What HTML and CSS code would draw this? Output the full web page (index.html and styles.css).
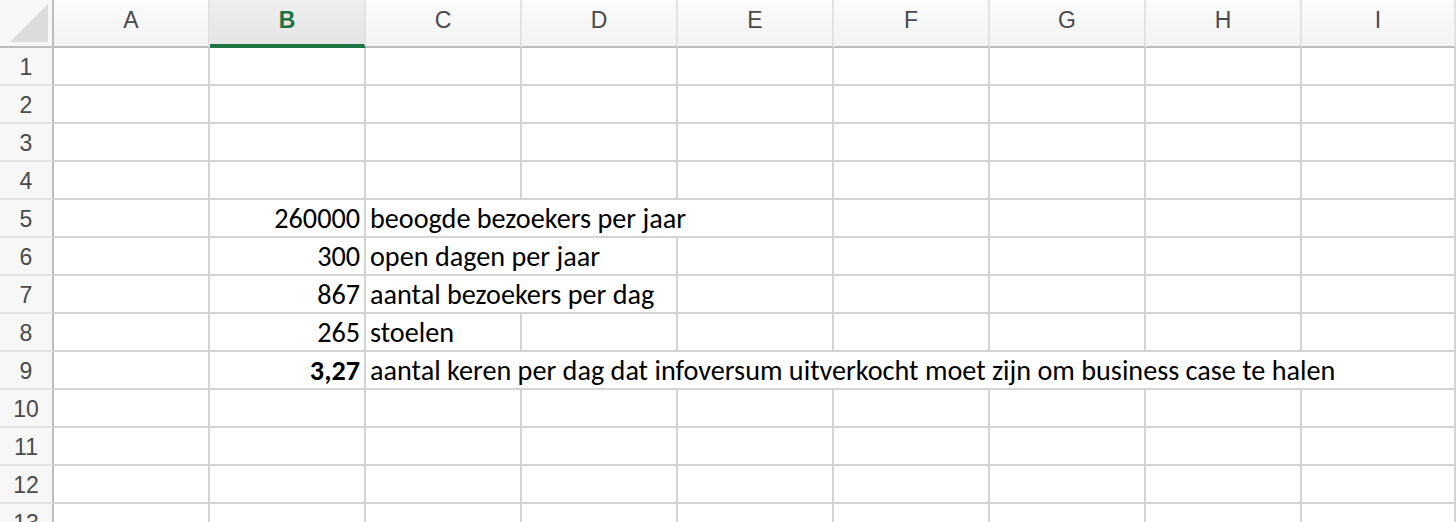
FILE: index.html
```html
<!DOCTYPE html>
<html>
<head>
<meta charset="utf-8">
<link rel="stylesheet" href="styles.css">
</head>
<body>
<div class="sheet">
  <div class="corner"><div class="tri"></div></div>
  <div class="colh">A</div>
  <div class="colh sel">B</div>
  <div class="colh">C</div>
  <div class="colh">D</div>
  <div class="colh">E</div>
  <div class="colh">F</div>
  <div class="colh">G</div>
  <div class="colh">H</div>
  <div class="colh">I</div>

  <div class="rowh">1</div><div class="c"></div><div class="c"></div><div class="c"></div><div class="c"></div><div class="c"></div><div class="c"></div><div class="c"></div><div class="c"></div><div class="c"></div>
  <div class="rowh">2</div><div class="c"></div><div class="c"></div><div class="c"></div><div class="c"></div><div class="c"></div><div class="c"></div><div class="c"></div><div class="c"></div><div class="c"></div>
  <div class="rowh">3</div><div class="c"></div><div class="c"></div><div class="c"></div><div class="c"></div><div class="c"></div><div class="c"></div><div class="c"></div><div class="c"></div><div class="c"></div>
  <div class="rowh">4</div><div class="c"></div><div class="c"></div><div class="c"></div><div class="c"></div><div class="c"></div><div class="c"></div><div class="c"></div><div class="c"></div><div class="c"></div>

  <div class="rowh">5</div><div class="c"></div><div class="c num">260000</div><div class="c txt span3">beoogde bezoekers per jaar</div><div class="c"></div><div class="c"></div><div class="c"></div><div class="c"></div>
  <div class="rowh">6</div><div class="c"></div><div class="c num">300</div><div class="c txt span2">open dagen per jaar</div><div class="c"></div><div class="c"></div><div class="c"></div><div class="c"></div><div class="c"></div>
  <div class="rowh">7</div><div class="c"></div><div class="c num">867</div><div class="c txt span2">aantal bezoekers per dag</div><div class="c"></div><div class="c"></div><div class="c"></div><div class="c"></div><div class="c"></div>
  <div class="rowh">8</div><div class="c"></div><div class="c num">265</div><div class="c txt">stoelen</div><div class="c"></div><div class="c"></div><div class="c"></div><div class="c"></div><div class="c"></div><div class="c"></div>
  <div class="rowh">9</div><div class="c"></div><div class="c num bold">3,27</div><div class="c txt span7">aantal keren per dag dat infoversum uitverkocht moet zijn om business case te halen</div>

  <div class="rowh">10</div><div class="c"></div><div class="c"></div><div class="c"></div><div class="c"></div><div class="c"></div><div class="c"></div><div class="c"></div><div class="c"></div><div class="c"></div>
  <div class="rowh">11</div><div class="c"></div><div class="c"></div><div class="c"></div><div class="c"></div><div class="c"></div><div class="c"></div><div class="c"></div><div class="c"></div><div class="c"></div>
  <div class="rowh">12</div><div class="c"></div><div class="c"></div><div class="c"></div><div class="c"></div><div class="c"></div><div class="c"></div><div class="c"></div><div class="c"></div><div class="c"></div>
  <div class="rowh">13</div><div class="c"></div><div class="c"></div><div class="c"></div><div class="c"></div><div class="c"></div><div class="c"></div><div class="c"></div><div class="c"></div><div class="c"></div>
</div>
</body>
</html>
```
FILE: styles.css
```css
* { box-sizing: border-box; }
html, body { margin: 0; padding: 0; background: #fff; overflow: hidden; }
body { width: 1456px; height: 522px; }
.sheet {
  display: grid;
  grid-template-columns: 54px repeat(8, 156px) 154px;
  grid-template-rows: 48px;
  grid-auto-rows: 38px;
  width: 1456px;
}
.corner {
  background: #f7f7f7;
  border-right: 2px solid #bdbdbd;
  border-bottom: 2px solid #bdbdbd;
  position: relative;
}
.tri {
  position: absolute;
  left: 10px; top: 4px;
  width: 38px; height: 38px;
  background: #dcdcdc;
  clip-path: polygon(100% 0, 100% 100%, 0 100%);
}
.colh {
  background: linear-gradient(#fbfbfb, #f3f3f3);
  border-right: 2px solid #e2e2e2;
  border-bottom: 2px solid #bdbdbd;
  display: flex; align-items: center; justify-content: center;
  padding-bottom: 5px;
  font-family: "Liberation Sans", Arial, sans-serif;
  font-size: 23px;
  color: #4a4a4a;
}
.colh.sel {
  background: linear-gradient(#efefef, #e4e4e4);
  border-bottom: 4px solid #217346;
  color: #217346;
  font-weight: bold;
  padding-bottom: 3px;
}
.rowh {
  background: #f7f7f7;
  border-right: 2px solid #bdbdbd;
  border-bottom: 2px solid #e2e2e2;
  display: flex; align-items: center; justify-content: center;
  font-family: "Liberation Sans", Arial, sans-serif;
  font-size: 23px;
  color: #4a4a4a;
  padding-top: 2px;
}
.c {
  border-right: 2px solid #d4d4d4;
  border-bottom: 2px solid #d4d4d4;
  background: #fff;
  display: flex; align-items: center;
  font-family: Carlito, "Liberation Sans", Arial, sans-serif;
  font-size: 28.2px;
  color: #000;
  white-space: nowrap;
  padding-top: 1px;
}
.num { justify-content: flex-end; padding-right: 4px; }
.txt { padding-left: 4px; }
.bold { font-weight: bold; }
.span2 { grid-column: span 2; }
.span3 { grid-column: span 3; }
.span7 { grid-column: span 7; }
```
